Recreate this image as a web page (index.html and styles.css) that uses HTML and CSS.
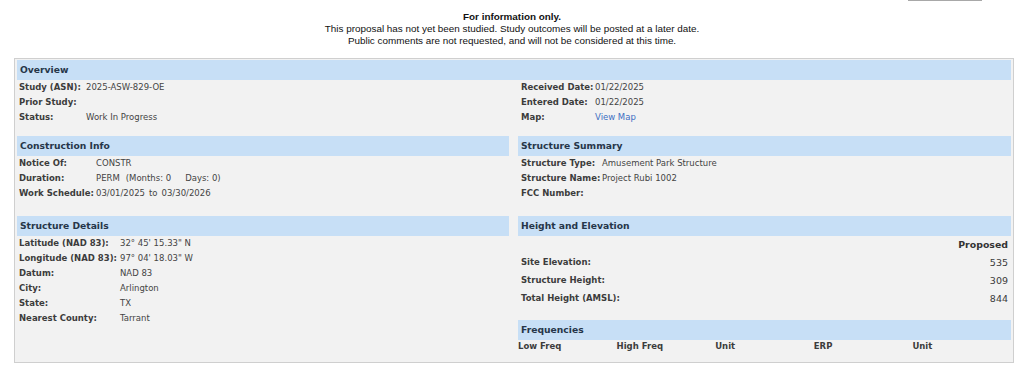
FILE: index.html
```html
<!DOCTYPE html>
<html>
<head>
<meta charset="utf-8">
<link rel="stylesheet" href="styles.css">
</head>
<body>
<div class="topbar"><span class="tab"></span></div>
<div class="notice">
  <div class="notice-title">For information only.</div>
  <div>This proposal has not yet been studied. Study outcomes will be posted at a later date.</div>
  <div>Public comments are not requested, and will not be considered at this time.</div>
</div>

<div class="case">
  <div class="sec-head">Overview</div>
  <div class="cols">
    <div class="kv kv-ov-l">
      <span class="k">Study (ASN):</span><span class="v">2025-ASW-829-OE</span>
      <span class="k">Prior Study:</span><span class="v"></span>
      <span class="k">Status:</span><span class="v">Work In Progress</span>
    </div>
    <div class="kv kv-ov-r">
      <span class="k">Received Date:</span><span class="v">01/22/2025</span>
      <span class="k">Entered Date:</span><span class="v">01/22/2025</span>
      <span class="k">Map:</span><span class="v"><a class="link" href="#">View Map</a></span>
    </div>
  </div>

  <div class="cols cols-main">
    <div class="col">
      <div class="sec-head">Construction Info</div>
      <div class="kv kv-con">
        <span class="k">Notice Of:</span><span class="v">CONSTR</span>
        <span class="k">Duration:</span><span class="v">PERM<span class="sp1">(Months: 0</span><span class="sp2">Days: 0)</span></span>
        <span class="k">Work Schedule:</span><span class="v">03/01/2025<span class="sp3">to</span><span class="sp3">03/30/2026</span></span>
      </div>

      <div class="sec-head sec-gap">Structure Details</div>
      <div class="kv kv-det">
        <span class="k">Latitude (NAD 83):</span><span class="v">32° 45' 15.33" N</span>
        <span class="k">Longitude (NAD 83):</span><span class="v">97° 04' 18.03" W</span>
        <span class="k">Datum:</span><span class="v">NAD 83</span>
        <span class="k">City:</span><span class="v">Arlington</span>
        <span class="k">State:</span><span class="v">TX</span>
        <span class="k">Nearest County:</span><span class="v">Tarrant</span>
      </div>
    </div>

    <div class="col">
      <div class="sec-head">Structure Summary</div>
      <div class="kv kv-sum">
        <span class="k">Structure Type:</span><span class="v">Amusement Park Structure</span>
        <span class="k">Structure Name:</span><span class="v">Project Rubi 1002</span>
        <span class="k">FCC Number:</span><span class="v"></span>
      </div>

      <div class="sec-head sec-gap">Height and Elevation</div>
      <div class="height">
        <span></span><span class="prop">Proposed</span>
        <span class="k">Site Elevation:</span><span class="num">535</span>
        <span class="k">Structure Height:</span><span class="num">309</span>
        <span class="k">Total Height (AMSL):</span><span class="num">844</span>
      </div>

      <div class="sec-head freq-gap">Frequencies</div>
      <div class="freq">
        <span>Low Freq</span><span>High Freq</span><span>Unit</span><span>ERP</span><span>Unit</span>
      </div>
    </div>
  </div>
</div>
</body>
</html>
```

FILE: styles.css
```css
html, body {
  margin: 0;
  padding: 0;
  background: #ffffff;
}

body {
  width: 1024px;
  height: 365px;
  overflow: hidden;
  font-family: "DejaVu Sans", Verdana, sans-serif;
  color: #3a3a3a;
}

.topbar {
  display: flex;
  justify-content: flex-end;
  height: 1px;
}

.tab {
  display: block;
  width: 74px;
  height: 1px;
  margin-right: 42px;
  background: #a8a8a8;
}

.notice {
  margin-top: 10px;
  text-align: center;
  font-family: "Liberation Sans", Arial, sans-serif;
  font-size: 9.9px;
  line-height: 12px;
  color: #111;
}

.notice-title {
  font-weight: bold;
}

.case {
  margin: 11px 0 0 14px;
  width: 994px;
  border: 1px solid #cfcfcf;
  padding: 1px 2px 9px 2px;
  background: #f2f2f2;
}

.sec-head {
  height: 20px;
  line-height: 20px;
  padding-left: 3px;
  background: #c7dff6;
  color: #263649;
  font-weight: bold;
  font-size: 9.2px;
}

.sec-gap {
  margin-top: 15px;
}

.freq-gap {
  margin-top: 13px;
}

.cols {
  display: grid;
  grid-template-columns: 492px 1fr;
  column-gap: 9px;
}

.cols-main {
  margin-top: 11px;
}

.kv {
  display: grid;
  font-size: 8.5px;
  line-height: 15px;
}

.kv .k {
  font-weight: bold;
  color: #3c3c3c;
  white-space: nowrap;
}

.kv .v {
  color: #444;
  white-space: nowrap;
}

.kv-ov-l {
  grid-template-columns: 67px 1fr;
  padding-left: 2px;
}

.kv-ov-r {
  grid-template-columns: 74px 1fr;
  padding-left: 3px;
}

.kv-con {
  grid-template-columns: 77px 1fr;
  padding-left: 2px;
}

.kv-det {
  grid-template-columns: 101px 1fr;
  padding-left: 2px;
}

.kv-sum {
  grid-template-columns: 81px 1fr;
  padding-left: 3px;
}

.sp1 {
  margin-left: 6px;
}

.sp2 {
  margin-left: 14px;
}

.sp3 {
  margin-left: 4px;
}

.link {
  color: #3d6fc2;
  text-decoration: none;
}

.height {
  display: grid;
  grid-template-columns: 1fr auto;
  grid-template-rows: 17px 18px 18px 18px;
  align-items: center;
  padding: 0 3px 0 3px;
}

.height .k {
  font-size: 8.5px;
  font-weight: bold;
  color: #3c3c3c;
}

.prop {
  justify-self: end;
  font-size: 9.4px;
  font-weight: bold;
  color: #333;
}

.num {
  justify-self: end;
  font-size: 9.5px;
  color: #3a3a3a;
}

.freq {
  display: grid;
  grid-template-columns: repeat(5, 1fr);
  height: 13px;
  line-height: 13px;
  font-size: 8.5px;
  font-weight: bold;
  color: #3c3c3c;
}
```
